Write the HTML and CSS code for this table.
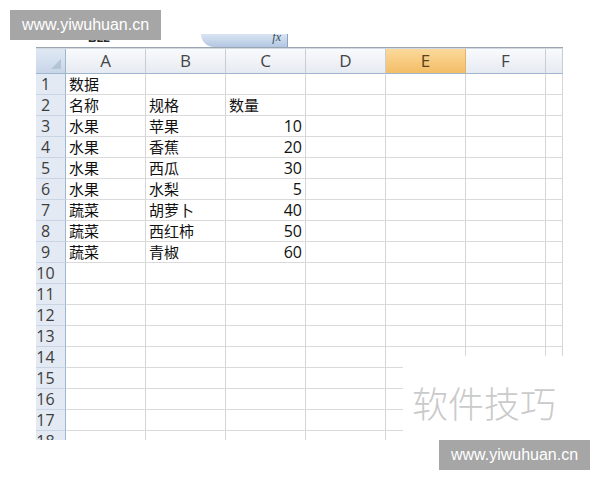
FILE: index.html
```html
<!DOCTYPE html>
<html lang="zh-CN">
<head>
<meta charset="utf-8">
<title>Sheet</title>
<link rel="stylesheet" href="styles.css">
</head>
<body>
<div class="page">
  <div class="wm wm-top">www.yiwuhuan.cn</div>
  <div class="sheet">
    <div class="fbar">
      <span class="namebox">B22</span>
      <span class="fx"><i>fx</i></span>
    </div>
    <div class="grid">
      <div class="corner"><span class="tri"></span></div>
      <div class="ch">A</div><div class="ch">B</div><div class="ch">C</div><div class="ch">D</div><div class="ch sel">E</div><div class="ch">F</div><div class="ch"></div>

      <div class="rh">1</div><div class="c">数据</div><div class="c"></div><div class="c"></div><div class="c"></div><div class="c"></div><div class="c"></div><div class="c"></div>
      <div class="rh">2</div><div class="c">名称</div><div class="c">规格</div><div class="c">数量</div><div class="c"></div><div class="c"></div><div class="c"></div><div class="c"></div>
      <div class="rh">3</div><div class="c">水果</div><div class="c">苹果</div><div class="c n">10</div><div class="c"></div><div class="c"></div><div class="c"></div><div class="c"></div>
      <div class="rh">4</div><div class="c">水果</div><div class="c">香蕉</div><div class="c n">20</div><div class="c"></div><div class="c"></div><div class="c"></div><div class="c"></div>
      <div class="rh">5</div><div class="c">水果</div><div class="c">西瓜</div><div class="c n">30</div><div class="c"></div><div class="c"></div><div class="c"></div><div class="c"></div>
      <div class="rh">6</div><div class="c">水果</div><div class="c">水梨</div><div class="c n">5</div><div class="c"></div><div class="c"></div><div class="c"></div><div class="c"></div>
      <div class="rh">7</div><div class="c">蔬菜</div><div class="c">胡萝卜</div><div class="c n">40</div><div class="c"></div><div class="c"></div><div class="c"></div><div class="c"></div>
      <div class="rh">8</div><div class="c">蔬菜</div><div class="c">西红柿</div><div class="c n">50</div><div class="c"></div><div class="c"></div><div class="c"></div><div class="c"></div>
      <div class="rh">9</div><div class="c">蔬菜</div><div class="c">青椒</div><div class="c n">60</div><div class="c"></div><div class="c"></div><div class="c"></div><div class="c"></div>
      <div class="rh">10</div><div class="c"></div><div class="c"></div><div class="c"></div><div class="c"></div><div class="c"></div><div class="c"></div><div class="c"></div>
      <div class="rh">11</div><div class="c"></div><div class="c"></div><div class="c"></div><div class="c"></div><div class="c"></div><div class="c"></div><div class="c"></div>
      <div class="rh">12</div><div class="c"></div><div class="c"></div><div class="c"></div><div class="c"></div><div class="c"></div><div class="c"></div><div class="c"></div>
      <div class="rh">13</div><div class="c"></div><div class="c"></div><div class="c"></div><div class="c"></div><div class="c"></div><div class="c"></div><div class="c"></div>
      <div class="rh">14</div><div class="c"></div><div class="c"></div><div class="c"></div><div class="c"></div><div class="c"></div><div class="c"></div><div class="c"></div>
      <div class="rh">15</div><div class="c"></div><div class="c"></div><div class="c"></div><div class="c"></div><div class="c"></div><div class="c"></div><div class="c"></div>
      <div class="rh">16</div><div class="c"></div><div class="c"></div><div class="c"></div><div class="c"></div><div class="c"></div><div class="c"></div><div class="c"></div>
      <div class="rh">17</div><div class="c"></div><div class="c"></div><div class="c"></div><div class="c"></div><div class="c"></div><div class="c"></div><div class="c"></div>
      <div class="rh">18</div><div class="c"></div><div class="c"></div><div class="c"></div><div class="c"></div><div class="c"></div><div class="c"></div><div class="c"></div>
    </div>
    <div class="mask">软件技巧</div>
  </div>
  <div class="wm wm-bottom">www.yiwuhuan.cn</div>
</div>
</body>
</html>
```

FILE: styles.css
```css
html, body {
  margin: 0;
  padding: 0;
  background: #ffffff;
}

.page {
  position: relative;
  width: 600px;
  height: 480px;
  overflow: hidden;
  background: #ffffff;
}

.wm {
  position: absolute;
  width: 151px;
  height: 30px;
  background: #a6a6a6;
  color: #ffffff;
  font-family: "Liberation Sans", Arial, sans-serif;
  font-size: 16px;
  line-height: 30px;
  text-align: center;
  z-index: 5;
}

.wm-top {
  left: 10px;
  top: 10px;
}

.wm-bottom {
  left: 439px;
  top: 440px;
}

.sheet {
  position: relative;
  margin: 34px 0 0 36px;
  width: 527px;
  height: 406px;
  overflow: hidden;
}

.fbar {
  display: flex;
  align-items: flex-end;
  height: 13px;
  border-bottom: 1px solid #9aa5b1;
  box-shadow: 0 1px 0 #d3d9e1;
  margin-bottom: 1px;
}

.namebox {
  margin-left: 52px;
  width: 34px;
  height: 13px;
  font-family: "Liberation Sans", Arial, sans-serif;
  font-weight: bold;
  font-size: 12px;
  line-height: 8px;
  color: #2a2a2a;
  overflow: hidden;
}

.fx {
  margin-left: 79px;
  width: 87px;
  height: 13px;
  background: linear-gradient(#d9e4f2, #b3c7e2);
  border-radius: 0 0 0 14px;
  border-right: 1px solid #8ea3bf;
  box-sizing: border-box;
  text-align: right;
  padding-right: 6px;
  font-family: "Liberation Serif", serif;
  font-size: 12px;
  line-height: 6px;
  color: #3a4a60;
  overflow: hidden;
}

.grid {
  display: grid;
  grid-template-columns: 30px repeat(6, 80px) 17px;
  grid-template-rows: 25px repeat(18, 21px);
}

.corner {
  position: relative;
  background: linear-gradient(#dfe8f4, #c9d6e8);
  border-right: 1px solid #9eb6ce;
  border-bottom: 1px solid #9eb6ce;
  box-sizing: border-box;
}

.tri {
  position: absolute;
  right: 4px;
  bottom: 4px;
  width: 0;
  height: 0;
  border-left: 10px solid transparent;
  border-bottom: 10px solid #b4c4d8;
}

.ch {
  background: linear-gradient(#f9fafc, #e6ebf2);
  border-right: 1px solid #c6cdd7;
  border-bottom: 1px solid #9eb6ce;
  box-sizing: border-box;
  font-family: "Open Sans", "Liberation Sans", sans-serif;
  font-size: 17px;
  line-height: 24px;
  text-align: center;
  color: #454545;
}

.ch.sel {
  background: linear-gradient(#fbd99b, #f3bd67);
  border-right-color: #e2b26a;
  color: #5a4220;
}

.rh {
  background: #e3eaf3;
  border-right: 1px solid #9eb6ce;
  border-bottom: 1px solid #c9d5e4;
  box-sizing: border-box;
  font-family: "Open Sans", "Liberation Sans", sans-serif;
  font-size: 16px;
  line-height: 21px;
  padding-right: 10px;
  text-align: center;
  color: #3d3d3d;
}

.c {
  border-right: 1px solid #d6d6d6;
  border-bottom: 1px solid #dadada;
  box-sizing: border-box;
  padding: 0 3px;
  font-family: "Noto Sans CJK SC", "Open Sans", sans-serif;
  font-size: 15px;
  line-height: 20px;
  color: #111111;
  white-space: nowrap;
}

.c.n {
  text-align: right;
  font-family: "Open Sans", "Liberation Sans", sans-serif;
  font-size: 16px;
}

.mask {
  position: absolute;
  left: 367px;
  top: 322px;
  width: 160px;
  height: 84px;
  background: #ffffff;
  box-sizing: border-box;
  padding: 28px 0 0 9px;
  font-family: "Noto Sans CJK SC", sans-serif;
  font-weight: 300;
  font-size: 36px;
  line-height: 36px;
  color: #cacaca;
  white-space: nowrap;
  z-index: 2;
}
```
